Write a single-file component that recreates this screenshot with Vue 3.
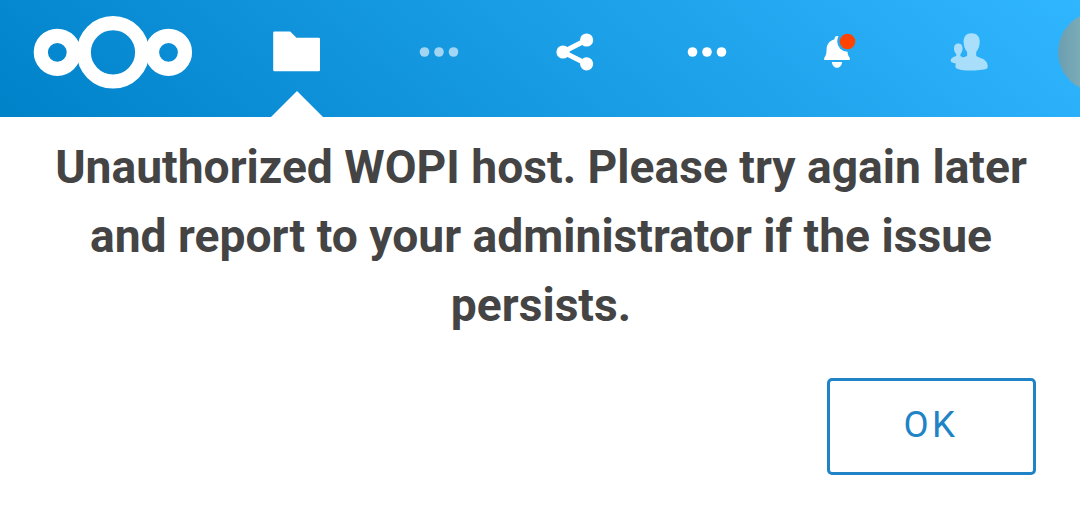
<template>
  <div class="page">
    <header class="header">
      <a class="logo" aria-label="Nextcloud">
        <svg width="160" height="76" viewBox="0 0 160 76">
          <g fill="none" stroke="#fff" stroke-width="14.2">
            <circle cx="24.3" cy="38.3" r="16.5" />
            <circle cx="80" cy="38.3" r="29.2" />
            <circle cx="135.5" cy="38.3" r="16.5" />
          </g>
        </svg>
      </a>

      <a class="entry active" aria-label="Files">
        <svg width="48" height="44" viewBox="0 0 48 44">
          <path
            fill="#fff"
            d="M1.500 1.500h15.700l6.300 6.300h22.200a1.300 1.300 0 0 1 1.300 1.300v30.800a1.300 1.300 0 0 1-1.300 1.300H1.500a1.300 1.300 0 0 1-1.300-1.300V2.800a1.300 1.300 0 0 1 1.300-1.300z"
          />
        </svg>
      </a>

      <a class="entry faded" aria-label="More apps">
        <svg width="40" height="12" viewBox="0 0 40 12">
          <circle v-for="n in 3" :key="n" :cx="n * 14.5 - 9" cy="6" r="4.8" fill="#fff" />
        </svg>
      </a>

      <a class="entry" aria-label="Share">
        <svg width="40" height="40" viewBox="0 0 40 40">
          <path d="M31.5 8 8 20l23.5 11.8" fill="none" stroke="#fff" stroke-width="5" />
          <circle cx="8" cy="20" r="6.6" fill="#fff" />
          <circle cx="31.6" cy="8" r="6.6" fill="#fff" />
          <circle cx="31.6" cy="31.8" r="6.6" fill="#fff" />
        </svg>
      </a>

      <a class="entry" aria-label="Menu">
        <svg width="40" height="12" viewBox="0 0 40 12">
          <circle v-for="n in 3" :key="n" :cx="n * 14.5 - 9" cy="6" r="4.8" fill="#fff" />
        </svg>
      </a>

      <a class="entry" aria-label="Notifications">
        <svg width="40" height="40" viewBox="0 0 40 40">
          <mask id="bell-cutout">
            <rect width="40" height="40" fill="#fff" />
            <circle cx="30.5" cy="9.5" r="10.3" fill="#000" />
          </mask>
          <g fill="#fff" mask="url(#bell-cutout)">
            <path
              d="M20 4c-1.500 0-2.400 1-2.400 2.400v.9C12.300 8.800 9.800 12.500 9.600 17c-.2 4.500-.4 6.500-2.400 8.700v2.300h25.600v-2.300c-2-2.200-2.200-4.200-2.400-8.700-.2-4.500-2.700-8.200-8-9.700v-.9C22.400 5 21.500 4 20 4z"
            />
            <path d="M14.800 30h10.400c-.6 3.600-2.500 5.800-5.200 5.800s-4.600-2.200-5.200-5.800z" />
          </g>
          <circle cx="30.5" cy="9.5" r="7.8" fill="#ff4402" />
        </svg>
      </a>

      <a class="entry faded" aria-label="Contacts">
        <svg width="40" height="40" viewBox="0 0 40 40">
          <path
            fill="#fff"
            d="M22.500 1.300c5.300 0 8.200 3.500 8.200 8.300 0 4.200-1.200 8-3.500 10.300v3.800c1.200 1.900 10 2.200 11.300 8.800.3 1.600.2 3.100-.2 3.800-1.600 1.300-8 2.200-15.300 2.200-8 0-14.600-.9-16.100-2.600-.6-1-.7-2.600.1-4.400-2-.4-4.200-1-5.200-2-.3-2.400.9-4 5.500-5.400v-1.900C5.800 20.900 5 18.500 5 16.300c0-3 1.500-4.900 4.300-4.900s4.300 1.900 4.300 4.900c0 2.200-.8 4.600-2.200 5.900v1.900c.4.500 1.600.9 2.700 1.300 2-.7 3.400-1 4-1.700v-3.800c-2.300-2.300-3.500-6.100-3.500-10.300 0-4.800 2.800-8.300 7.900-8.300z"
          />
        </svg>
      </a>

      <div class="user">
        <div class="avatar" />
      </div>
    </header>

    <main class="dialog">
      <p class="message">{{ message }}</p>
      <button class="confirm" type="button">OK</button>
    </main>
  </div>
</template>

<script setup>
const message =
  'Unauthorized WOPI host. Please try again later and report to your administrator if the issue persists.'
</script>

<style>
body {
  margin: 0;
  background: #fff;
}
</style>

<style scoped>
.page {
  height: 509px;
  overflow: hidden;
  background: #fff;
  font-family: Roboto, "Open Sans", sans-serif;
}

.header {
  display: grid;
  grid-template-columns: 231px 131px 154px 118px 146px 114px 150px 36px;
  height: 117px;
  overflow: hidden;
  background: linear-gradient(40deg, #0082c9 0%, #30b6ff 100%);
}

.logo,
.entry,
.user {
  display: flex;
  align-items: center;
  box-sizing: border-box;
  padding-bottom: 13px;
}

.logo {
  padding-left: 33px;
}

.entry {
  position: relative;
  justify-content: center;
}

.faded svg {
  opacity: 0.6;
}

/* pointer below the current app */
.active::after {
  content: '';
  position: absolute;
  bottom: 0;
  left: 50%;
  border: 26px solid transparent;
  border-top: 0;
  border-bottom-color: #fff;
  transform: translateX(-50%);
}

.user {
  padding-left: 14px;
}

.avatar {
  flex: none;
  width: 80px;
  height: 80px;
  border-radius: 50%;
  background: linear-gradient(90deg, #6b9eb0 0%, #7cacb8 30%, #86b0b8 100%);
}

.dialog {
  display: flex;
  flex-direction: column;
  padding: 16px 44px 0;
}

.message {
  margin: 0;
  padding-left: 2px;
  color: #444;
  font-size: 46.2px;
  font-weight: 700;
  line-height: 69px;
  text-align: center;
}

.confirm {
  align-self: flex-end;
  box-sizing: border-box;
  width: 209px;
  height: 97px;
  margin-top: 38px;
  padding: 0 1px 4px 0;
  border: 3px solid #2083c5;
  border-radius: 5px;
  background: #fff;
  color: #2083c5;
  font-family: inherit;
  font-size: 36.5px;
  letter-spacing: 3.5px;
}
</style>
